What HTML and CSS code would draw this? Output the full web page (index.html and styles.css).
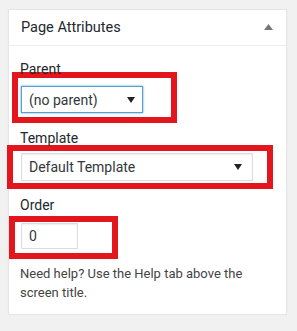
FILE: index.html
```html
<!DOCTYPE html>
<html>
<head>
<meta charset="utf-8">
<link rel="stylesheet" href="styles.css">
</head>
<body>
<div class="postbox">
  <div class="hndle">
    <h2 class="title">Page Attributes</h2>
    <svg class="toggle" width="9" height="6" viewBox="0 0 9 6"><path d="M0 6 L4.5 0 L9 6 Z" fill="#72777c"/></svg>
  </div>
  <div class="inside">
    <p class="label">Parent</p>
    <div class="mark mark-parent">
      <div class="select select-focus">
        <span>(no parent)</span>
        <svg width="8" height="6" viewBox="0 0 8 6"><path d="M0 0 L8 0 L4 6 Z" fill="#222"/></svg>
      </div>
    </div>
    <p class="label label-template">Template</p>
    <div class="mark mark-template">
      <div class="select select-wide">
        <span>Default Template</span>
        <svg width="8" height="6" viewBox="0 0 8 6"><path d="M0 0 L8 0 L4 6 Z" fill="#222"/></svg>
      </div>
    </div>
    <p class="label label-order">Order</p>
    <div class="mark mark-order">
      <div class="input">0</div>
    </div>
    <p class="help">Need help? Use the Help tab above the screen title.</p>
  </div>
</div>
</body>
</html>
```

FILE: styles.css
```css
* { box-sizing: border-box; }
body {
  margin: 0;
  padding: 9px 0 0 8px;
  background: #f1f1f1;
  font-family: Roboto, "Open Sans", sans-serif;
  color: #32373c;
}
.postbox {
  width: 279px;
  background: #fff;
  border: 1px solid #e5e5e5;
  box-shadow: 0 1px 1px rgba(0,0,0,.05);
}
.hndle {
  height: 36px;
  border-bottom: 1px solid #eee;
  display: flex;
  align-items: center;
  justify-content: space-between;
  padding: 0 13px 0 12px;
}
.title {
  margin: 0;
  font-size: 14.5px;
  font-weight: 400;
  color: #23282d;
  line-height: 19px;
}
.toggle { margin-top: -2px; }
.inside {
  padding: 14px 0 12px 0;
}
.label {
  margin: 0 0 0 11px;
  font-size: 14px;
  line-height: 19px;
  color: #23282d;
}
.label-template { margin-top: 6px; }
.label-order { margin-top: 7px; }
.mark {
  border: 6px solid #e3151d;
}
.mark-parent {
  width: 165px;
  margin: -7px 0 0 3px;
  padding: 8px 0 4px 3px;
}
.mark-template {
  width: 266px;
  margin: -3px 0 0 -2px;
  padding: 2px 0 2px 8px;
}
.mark-order {
  width: 109px;
  margin: 1px 0 0 0;
  padding: 1px 0 4px 6px;
}
.select {
  display: flex;
  align-items: center;
  justify-content: space-between;
  height: 27px;
  width: 122px;
  padding: 0 7px 0 7px;
  border: 1px solid #ddd;
  box-shadow: inset 0 1px 2px rgba(0,0,0,.07);
  font-size: 14px;
  color: #32373c;
  background: #fff;
}
.select-focus {
  border-color: #5b9dd9;
  box-shadow: 0 0 2px rgba(30,140,190,.8);
}
.select-wide {
  width: 232px;
  height: 28px;
  padding-right: 10px;
}
.input {
  width: 57px;
  height: 26px;
  border: 1px solid #ddd;
  box-shadow: inset 0 1px 2px rgba(0,0,0,.07);
  font-size: 14px;
  line-height: 24px;
  padding-left: 7px;
  color: #32373c;
}
.help {
  margin: 5px 20px 0 11px;
  font-size: 13px;
  line-height: 19px;
  color: #444;
}
```
